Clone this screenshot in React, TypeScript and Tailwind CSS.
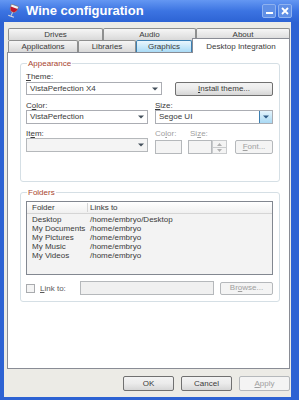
import React from 'react';

const Arrow = ({ color = '#44505c' }: { color?: string }) => (
  <svg width="6" height="4" viewBox="0 0 6 4">
    <path d="M0 0.5h6L3 3.5z" fill={color} />
  </svg>
);

const U = ({ children }: { children: React.ReactNode }) => <span className="underline">{children}</span>;

const Button = ({
  children,
  disabled,
  className = '',
}: {
  children: React.ReactNode;
  disabled?: boolean;
  className?: string;
}) => (
  <div
    className={
      'flex items-center justify-center rounded-[2px] border ' +
      (disabled
        ? 'border-[#b5b8bb] bg-[#f4f4f4] text-[#a0a0a0] '
        : 'border-[#707070] bg-linear-to-b from-[#f3f3f3] via-[#ebebeb] to-[#d6d6d6] text-[#3a3a3a] ') +
      className
    }
  >
    {children}
  </div>
);

const Select = ({
  value,
  className = '',
  disabled,
  hot,
}: {
  value?: string;
  className?: string;
  disabled?: boolean;
  hot?: boolean;
}) => (
  <div
    className={
      'flex items-center border ' +
      (disabled ? 'border-[#b5b8bb] bg-[#f4f4f4] ' : 'border-[#abadb3] bg-white ') +
      className
    }
  >
    <span className="flex-1 pl-[3px] leading-[10px] text-[#3a3a3a]">{value}</span>
    {hot ? (
      <div className="flex h-full w-[13px] items-center justify-center border-l border-[#3c7fb1] bg-linear-to-b from-[#e5f4fc] to-[#a9d9f4]">
        <Arrow color="#2e5b86" />
      </div>
    ) : (
      <div className="flex h-full w-[13px] items-center justify-center">
        <Arrow />
      </div>
    )}
  </div>
);

const Tab = ({
  label,
  w,
  state,
}: {
  label: string;
  w: string;
  state?: 'active' | 'hot';
}) => {
  if (state === 'active')
    return (
      <div
        className={
          'relative z-10 -mb-px flex h-[15px] items-start justify-center border border-b-0 border-[#898c95] bg-white pt-[2px] text-[#3a3a3a] ' +
          w
        }
      >
        {label}
      </div>
    );
  return (
    <div
      className={
        'flex h-[12px] items-center justify-center border border-b-0 rounded-t-[2px] text-[#3a3a3a] ' +
        (state === 'hot'
          ? 'border-[#3c7fb1] bg-linear-to-b from-[#eaf6fd] to-[#a9dbf6] '
          : 'border-[#8e8f8f] bg-linear-to-b from-[#f6f6f6] to-[#d9d9d9] ') +
        w
      }
    >
      {label}
    </div>
  );
};

const GroupBox = ({
  title,
  className = '',
  children,
}: {
  title: string;
  className?: string;
  children: React.ReactNode;
}) => (
  <div className={'relative ml-[12px] w-[260px] rounded-[3px] border border-[#d5dfe5] ' + className}>
    <span className="absolute -top-[5px] left-[6px] bg-white px-[1px] leading-[9px] text-[#a8452f]">{title}</span>
    {children}
  </div>
);

const folders = [
  ['Desktop', '/home/embryo/Desktop'],
  ['My Documents', '/home/embryo'],
  ['My Pictures', '/home/embryo'],
  ['My Music', '/home/embryo'],
  ['My Videos', '/home/embryo'],
];

const WineIcon = () => (
  <svg width="12" height="14" viewBox="0 0 12 14">
    <g transform="rotate(20 6 7)">
      <path d="M2 1h8l-0.5 4.5C9 7.5 7.5 8.5 6 8.5S3 7.5 2.5 5.5z" fill="#f4f4f4" stroke="#6b6b6b" strokeWidth="0.6" />
      <path d="M2.4 3.5h7.2l-0.3 2C8.8 7 7.5 8 6 8S3.2 7 2.7 5.5z" fill="#c0182b" />
      <rect x="5.5" y="8.5" width="1" height="3.5" fill="#dcdcdc" />
      <rect x="3" y="12" width="6" height="1.2" fill="#dcdcdc" />
    </g>
  </svg>
);

export default function App() {
  return (
    <div className="flex h-[400px] w-[299px] flex-col bg-[#2d62d3] font-['Liberation_Sans',Arial,sans-serif] text-[8px]">
      {/* title bar */}
      <div className="flex h-[22px] items-center bg-linear-to-b from-[#6497f2] via-[#3c74e2] to-[#2d63d4] pl-[7px] pr-[7px]">
        <WineIcon />
        <span className="ml-[7px] text-[13px] font-bold leading-[14px] text-white">Wine configuration</span>
        <div className="ml-auto flex gap-[2px]">
          <div className="flex h-[14px] w-[14px] items-end justify-center rounded-[2px] border border-[#8fb2f0] bg-[#5f8fe6] pb-[3px]">
            <div className="h-[2px] w-[7px] bg-white" />
          </div>
          <div className="flex h-[14px] w-[14px] items-center justify-center rounded-[2px] border border-[#8fb2f0] bg-[#5f8fe6]">
            <svg width="8" height="8" viewBox="0 0 8 8">
              <path d="M1 1l6 6M7 1L1 7" stroke="white" strokeWidth="1.8" />
            </svg>
          </div>
        </div>
      </div>

      {/* body */}
      <div className="mb-[3px] ml-[4px] mr-[8px] flex flex-1 flex-col bg-[#ecebe6] pl-[3px] pt-[6px]">
        <div className="ml-[1px] flex">
          <Tab label="Drives" w="w-[95px]" />
          <Tab label="Audio" w="w-[93px]" />
          <Tab label="About" w="w-[94px]" />
        </div>
        <div className="ml-[1px] flex h-[12px] items-end">
          <Tab label="Applications" w="w-[70px]" />
          <Tab label="Libraries" w="w-[58px]" />
          <Tab label="Graphics" w="w-[56px]" state="hot" />
          <Tab label="Desktop Integration" w="w-[98px]" state="active" />
        </div>

        {/* panel */}
        <div className="flex h-[317px] w-[283px] flex-col border border-[#898c95] bg-white pt-[10px] text-[#3a3a3a]">
          <GroupBox title="Appearance" className="h-[119px]">
            <div className="flex flex-col pl-[5px] pt-[8px]">
              <div className="h-[9px] leading-[9px]">
                <U>T</U>heme:
              </div>
              <div className="mt-[1px] flex items-start">
                <Select value="VistaPerfection X4" className="h-[13px] w-[136px]" />
                <Button className="ml-[13px] h-[14px] w-[98px]">
                  <U>I</U>nstall theme...
                </Button>
              </div>

              <div className="mt-[5px] flex h-[9px] leading-[9px]">
                <span className="w-[129px]">
                  C<U>o</U>lor:
                </span>
                <span>
                  <U>S</U>ize:
                </span>
              </div>
              <div className="flex">
                <Select value="VistaPerfection" className="h-[14px] w-[122px]" />
                <Select value="Segoe UI" className="ml-[7px] h-[14px] w-[118px]" hot />
              </div>

              <div className="mt-[5px] flex h-[9px] leading-[9px]">
                <span className="w-[129px]">
                  It<U>e</U>m:
                </span>
                <span className="w-[35px] text-[#a0a0a0]">
                  Co<U>l</U>or:
                </span>
                <span className="text-[#a0a0a0]">
                  Si<U>z</U>e:
                </span>
              </div>
              <div className="flex items-start">
                <Select className="h-[14px] w-[122px]" disabled />
                <div className="ml-[7px] mt-[2px] h-[14px] w-[27px] border border-[#b5b8bb] bg-[#f4f4f4]" />
                <div className="ml-[6px] mt-[2px] flex h-[14px]">
                  <div className="h-[14px] w-[24px] border border-[#b5b8bb] bg-[#f4f4f4]" />
                  <div className="flex w-[15px] flex-col">
                    <div className="flex h-[7px] items-center justify-center border border-b-0 border-[#c9cbcd] bg-[#f4f4f4]">
                      <svg width="5" height="3" viewBox="0 0 5 3">
                        <path d="M0 3h5L2.5 0z" fill="#b0b0b0" />
                      </svg>
                    </div>
                    <div className="flex h-[7px] items-center justify-center border border-[#c9cbcd] bg-[#f4f4f4]">
                      <svg width="5" height="3" viewBox="0 0 5 3">
                        <path d="M0 0h5L2.5 3z" fill="#b0b0b0" />
                      </svg>
                    </div>
                  </div>
                </div>
                <Button disabled className="ml-[8px] mt-[2px] h-[14px] w-[38px]">
                  <U>F</U>ont...
                </Button>
              </div>
            </div>
          </GroupBox>

          <GroupBox title="Folders" className="mt-[10px] h-[110px]">
            <div className="flex flex-col pl-[5px] pt-[8px]">
              <div className="h-[74px] w-[247px] border border-[#828790] bg-[#f3f3f3]">
                <div className="flex h-[12px] items-center border-b border-[#d5d5d5] bg-linear-to-b from-white to-[#f0f0f0] leading-[9px]">
                  <span className="w-[61px] border-r border-[#d5d5d5] pl-[5px]">Folder</span>
                  <span className="pl-[2px]">Links to</span>
                </div>
                <div className="pt-[1px]">
                  {folders.map(([name, link]) => (
                    <div key={name} className="flex h-[9px] leading-[9px]">
                      <span className="w-[62px] pl-[5px]">{name}</span>
                      <span className="pl-[1px]">{link}</span>
                    </div>
                  ))}
                </div>
              </div>
              <div className="mt-[6px] flex items-center">
                <div className="h-[9px] w-[9px] border border-[#a9abae] bg-[#f4f4f4]" />
                <span className="ml-[5px] w-[40px] leading-[9px] text-[#5a5a5a]">
                  <U>L</U>ink to:
                </span>
                <div className="h-[14px] w-[134px] border border-[#b5b8bb] bg-[#f0f0f0]" />
                <Button disabled className="ml-[6px] h-[13px] w-[53px]">
                  Br<U>o</U>wse...
                </Button>
              </div>
            </div>
          </GroupBox>
        </div>

        {/* dialog buttons */}
        <div className="mt-[7px] flex justify-end gap-[7px] pr-[1px]">
          <Button className="h-[15px] w-[51px]">OK</Button>
          <Button className="h-[15px] w-[51px]">Cancel</Button>
          <Button disabled className="h-[15px] w-[51px]">
            <U>A</U>pply
          </Button>
        </div>
      </div>
    </div>
  );
}
